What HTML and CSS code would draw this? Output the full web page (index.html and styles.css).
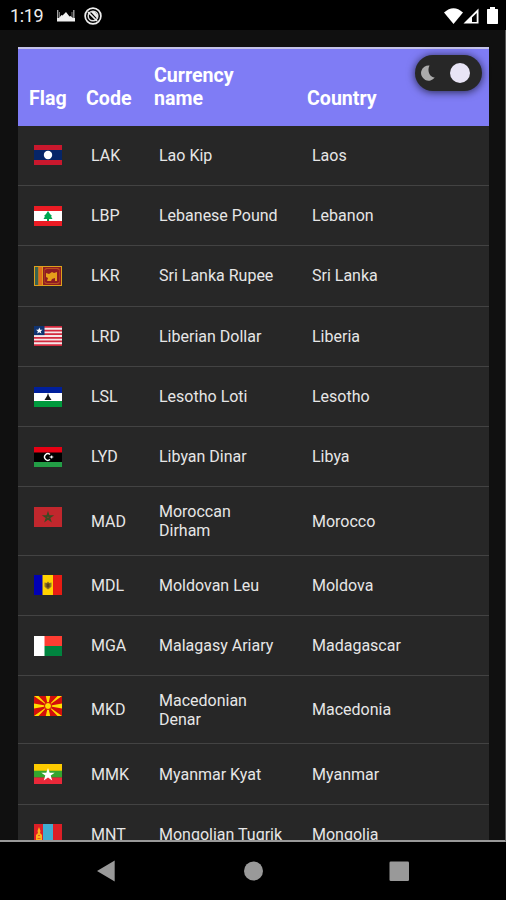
FILE: index.html
```html
<!DOCTYPE html>
<html lang="en">

<head>
    <meta charset="UTF-8">
    <meta name="viewport" content="width=device-width, initial-scale=1.0">
    <title>Currencies</title>
    <link rel="stylesheet" href="styles.css">
</head>

<body>
    <!-- Status Bar -->
    <header class="status-bar">
        <span class="time">1:19</span>
        <svg class="picture-icon" viewBox="0 0 18 13">
            <path d="M.7 1v11M16.800 1v11" stroke="#aaa" stroke-width="1.300"/>
            <path d="M2.500 3v9M15 3v9" stroke="#777" stroke-width="1"/>
            <path d="M0 12.500V9l2 0 2.500-3 1 .5L9 3l3.500 4.500 1-.5L16 9l2 0v3.500z" fill="#f0f0f0"/>
        </svg>
        <svg class="app-icon" viewBox="0 0 18 18">
            <circle cx="9" cy="9" r="7.900" fill="none" stroke="#eee" stroke-width="1.700"/>
            <circle cx="9" cy="9" r="4.800" fill="none" stroke="#ddd" stroke-width="1.500"/>
            <path d="M4 5l9 9" stroke="#eee" stroke-width="1.700"/>
            <path d="M7 5h4l2.500 3v4z" fill="#eee"/>
        </svg>
        <div class="status-right">
            <svg class="wifi" viewBox="0 0 19 16"><path d="M0 4.500Q9.500-4 19 4.500L9.500 16z" fill="#fff"/></svg>
            <svg class="signal" viewBox="0 0 16 16"><path d="M15.500.5v15H.5z" fill="#fff"/><path d="M9 9.500l4.700-4.500v9H9z" fill="#000"/></svg>
            <svg class="battery" viewBox="0 0 11 17"><path d="M3 0h5v2h2.500l.5.500V16.500l-.5.500H.5l-.5-.5V2.500L.5 2H3z" fill="#fff"/></svg>
        </div>
    </header>

    <!-- Currency List -->
    <main>
        <div class="table">
            <div class="row head">
                <span>Flag</span>
                <span>Code</span>
                <span>Currency name</span>
                <span>Country</span>
                <div class="toggle">
                    <svg class="moon" viewBox="0 0 14 16"><path d="M8.500.5A7.600 7.600 0 1 0 13.800 12.500C9.500 13 5.500 6.500 8.500.5z" fill="#aaa"/></svg>
                    <div class="knob"></div>
                </div>
            </div>
            <div class="row">
                <svg class="flag" viewBox="0 0 28 20"><path fill="#c9182d" d="M0 0h28v20H0z"/><path fill="#062568" d="M0 5h28v10H0z"/><circle cx="14" cy="10" r="4.200" fill="#fff"/></svg>
                <span>LAK</span><span>Lao Kip</span><span>Laos</span>
            </div>
            <div class="row">
                <svg class="flag" viewBox="0 0 28 20"><path fill="#ec1c24" d="M0 0h28v20H0z"/><path fill="#fff" d="M0 5h28v10H0z"/><path fill="#00a651" d="M14 5l2 3 2 2-1 .5 1.500 2.500H15v2h-2v-2H9.500l1.500-2.500-1-.5 2-2z"/></svg>
                <span>LBP</span><span>Lebanese Pound</span><span>Lebanon</span>
            </div>
            <div class="row">
                <svg class="flag" viewBox="0 0 28 20"><path fill="#dda01c" d="M0 0h28v20H0z"/><path fill="#39634f" d="M1 1h3.500v18H1z"/><path fill="#e06b1b" d="M4.500 1H8v18H4.500z"/><path fill="#8e1c22" d="M9 1h18v18H9z"/><path fill="#b8501e" d="M10.500 3l1.500-1h12l1.500 1v14L24 18H12l-1.500-1z"/><path fill="#8e1c22" d="M11 4l2-1h10l2 1v12l-2 1H13l-2-1z"/><path fill="#e6a01b" d="M12 7l3 1 3-2 2 1 3-1v9h-2v-3l-3 1-1 2h-4l1-3-2-1z"/></svg>
                <span>LKR</span><span>Sri Lanka Rupee</span><span>Sri Lanka</span>
            </div>
            <div class="row">
                <svg class="flag" viewBox="0 0 28 20"><path fill="#f4e6e8" d="M0 0h28v20H0z"/><path stroke="#d2283d" stroke-width="1.820" d="M0 .91h28M0 4.540h28M0 8.180h28M0 11.820h28M0 15.450h28M0 19.090h28"/><path fill="#103370" d="M0 0h10.500v9.100H0z"/><path fill="#fff" d="M5.300 1.500l.9 2.200h2.400L6.700 5.200l.7 2.400-2.100-1.400-2.100 1.400.7-2.400L2 3.700h2.400z"/></svg>
                <span>LRD</span><span>Liberian Dollar</span><span>Liberia</span>
            </div>
            <div class="row">
                <svg class="flag" viewBox="0 0 28 20"><path fill="#fff" d="M0 0h28v20H0z"/><path fill="#001f9c" d="M0 0h28v6H0z"/><path fill="#009a3d" d="M0 14h28v6H0z"/><path fill="#151515" d="M14 6l1 3 2.500 4h-7L13 9z"/></svg>
                <span>LSL</span><span>Lesotho Loti</span><span>Lesotho</span>
            </div>
            <div class="row">
                <svg class="flag" viewBox="0 0 28 20"><path fill="#000" d="M0 0h28v20H0z"/><path fill="#e70013" d="M0 0h28v5.500H0z"/><path fill="#239e46" d="M0 15h28v5H0z"/><path fill="none" stroke="#fff" stroke-width="1.300" d="M16 7.500a3.300 3.300 0 1 0 0 5"/><path fill="#fff" d="M15 10l2-.7L18 8l.3 1.500 1.700.5-1.700.5L18 12l-1-1.300z"/></svg>
                <span>LYD</span><span>Libyan Dinar</span><span>Libya</span>
            </div>
            <div class="row tall">
                <svg class="flag" viewBox="0 0 28 20"><path fill="#c1272d" d="M0 0h28v20H0z"/><path fill="none" stroke="#394b23" stroke-width="1.500" d="M14 6.200l2.400 7.400-6.300-4.600h7.800l-6.300 4.600z"/></svg>
                <span>MAD</span><span>Moroccan Dirham</span><span>Morocco</span>
            </div>
            <div class="row">
                <svg class="flag" viewBox="0 0 28 20"><path fill="#0000b5" d="M0 0h9v20H0z"/><path fill="#ffd200" d="M8.500 0H19v20H8.500z"/><path fill="#e81c13" d="M19 0h9v20h-9z"/><path fill="#8c7024" d="M10.500 7.500l2 .5 1.500-1.500L15.500 8l2-.5v4L16 13l-2 1.500-2-1.500-1.500-1.500z"/><path fill="#59401b" d="M12.500 8.500h3v3L14 13l-1.500-1.500z"/></svg>
                <span>MDL</span><span>Moldovan Leu</span><span>Moldova</span>
            </div>
            <div class="row">
                <svg class="flag" viewBox="0 0 28 20"><path fill="#fff" d="M0 0h11v20H0z"/><path fill="#ff3d32" d="M10.500 0H28v10H10.500z"/><path fill="#00843f" d="M10.500 10H28v10H10.500z"/></svg>
                <span>MGA</span><span>Malagasy Ariary</span><span>Madagascar</span>
            </div>
            <div class="row tall">
                <svg class="flag" viewBox="0 0 28 20"><path fill="#d20f0b" d="M0 0h28v20H0z"/><path fill="#ffdc00" d="M0 0h4.500L14 10zM28 0h-4.500L14 10zM0 20h4.500L14 10zM28 20h-4.500L14 10zM11.800 0h4.400L14 10zM11.800 20h4.400L14 10zM0 7.500v5L14 10zM28 7.500v5L14 10z"/><circle cx="14" cy="10" r="3.500" fill="#ffdc00" stroke="#d20f0b"/></svg>
                <span>MKD</span><span>Macedonian Denar</span><span>Macedonia</span>
            </div>
            <div class="row">
                <svg class="flag" viewBox="0 0 28 20"><path fill="#fecb00" d="M0 0h28v7H0z"/><path fill="#34a52f" d="M0 6.700h28v7H0z"/><path fill="#ea2839" d="M0 13.400h28V20H0z"/><path fill="#fff" d="M14 4l1.700 4.700h5L16.700 11.600l1.500 4.800-4.200-2.900-4.200 2.900 1.500-4.800-4-2.900h5z"/></svg>
                <span>MMK</span><span>Myanmar Kyat</span><span>Myanmar</span>
            </div>
            <div class="row">
                <svg class="flag" viewBox="0 0 28 20"><path fill="#dc1f26" d="M0 0h28v20H0z"/><path fill="#40aed1" d="M9 0h10v20H9z"/><path fill="#ffb31a" d="M5 3l1.500 4L6 9l2 2v9H2v-9l2-2-.5-2z"/><path fill="#e65a20" d="M4 11h2v1H4zM3.500 14h3v1h-3z"/></svg>
                <span>MNT</span><span>Mongolian Tugrik</span><span>Mongolia</span>
            </div>
        </div>
    </main>

    <!-- Navigation Bar -->
    <footer class="nav-bar">
        <svg class="nav-icon" viewBox="0 0 22 22"><path d="M18.700 .5v21L1 11z" fill="#999"/></svg>
        <svg class="nav-icon" viewBox="0 0 22 22"><circle cx="11.500" cy="11" r="9.500" fill="#999"/></svg>
        <svg class="nav-icon" viewBox="0 0 22 22"><rect x="1.500" y="1.500" width="19.500" height="19.500" rx="1.300" fill="#999"/></svg>
    </footer>
</body>

</html>
```
FILE: styles.css
```css
/* General Reset */
* {
    margin: 0;
    padding: 0;
    box-sizing: border-box;
}

body {
    display: flex;
    flex-direction: column;
    height: 900px;
    overflow: hidden;
    background-color: #000;
    color: #e6e6e6;
    font-family: Roboto, sans-serif;
}

svg {
    display: block;
    flex-shrink: 0;
}

/* Status Bar */
.status-bar {
    display: flex;
    align-items: center;
    height: 30px;
    padding: 1px 8px 0 10px;
}

.time {
    width: 47px;
    font-size: 18px;
    letter-spacing: -0.4px;
    color: #eee;
}

.picture-icon {
    width: 18px;
    height: 13px;
    margin-right: 9px;
}

.app-icon {
    width: 18px;
    height: 18px;
}

.status-right {
    display: flex;
    align-items: center;
    margin-left: auto;
}

.wifi {
    width: 19px;
    height: 16px;
}

.signal {
    width: 16px;
    height: 16px;
    margin-right: 8px;
}

.battery {
    width: 11px;
    height: 17px;
}

/* Main Content */
main {
    height: 812px;
    padding: 17px 16px 0 18px;
    background-color: #101010;
    border-right: 1px solid #555;
    border-bottom: 2px solid #999;
    overflow: hidden;
}

.row {
    display: grid;
    grid-template-columns: 57px 68px 153px 1fr;
    align-items: center;
    height: 60.3px;
    padding: 0 16px;
    background-color: #272727;
    border-bottom: 1.5px solid #434343;
    font-size: 16px;
    line-height: 19px;
}

.row.tall {
    height: 68.2px;
}

.row span:nth-child(3) {
    padding-right: 28px;
}

.flag {
    align-self: start;
    width: 28px;
    height: 20px;
    margin-top: 19.7px;
}

/* Table Header */
.row.head {
    position: relative;
    align-items: end;
    height: 78.7px;
    padding: 0 11px 16px;
    background-color: #7f7cf5;
    border-top: 2px solid #c4c3e8;
    border-bottom: none;
    color: #fff;
    font-size: 19.6px;
    font-weight: bold;
    line-height: 23px;
}

/* Dark Mode Toggle */
.toggle {
    position: absolute;
    top: 6px;
    right: 7px;
    display: flex;
    align-items: center;
    justify-content: space-between;
    width: 67px;
    height: 36px;
    padding: 0 12px 0 6px;
    background-color: #272727;
    border-radius: 18px;
    box-shadow: 0 1px 9px rgba(0, 0, 0, 0.7);
}

.moon {
    width: 14px;
    height: 16px;
}

.knob {
    width: 20px;
    height: 20px;
    background-color: #e8e4f5;
    border-radius: 50%;
}

/* Navigation Bar */
.nav-bar {
    display: flex;
    align-items: center;
    justify-content: space-between;
    height: 58px;
    padding: 0 96px;
}

.nav-icon {
    width: 22px;
    height: 22px;
}
```
